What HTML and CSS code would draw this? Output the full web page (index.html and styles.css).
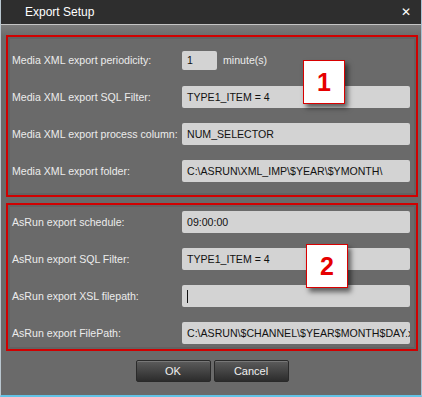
FILE: index.html
```html
<!DOCTYPE html>
<html lang="en">
  <head>
    <meta charset="UTF-8" />
    <meta name="viewport" content="width=device-width, initial-scale=1.0" />
    <title>Export Setup</title>
    <link rel="stylesheet" href="styles.css">
  </head>
  <body>
    <div class="dialog">
      <div class="titlebar">
        <span class="title">Export Setup</span>
        <span class="close">&#x2715;</span>
      </div>
      <div class="content">
        <section class="group group-media">
          <div class="row">
            <span class="label">Media XML export periodicity:</span>
            <div class="inline">
              <div class="field field-short">1</div>
              <span class="unit">minute(s)</span>
            </div>
          </div>
          <div class="row">
            <span class="label">Media XML export SQL Filter:</span>
            <div class="field">TYPE1_ITEM = 4</div>
          </div>
          <div class="row">
            <span class="label">Media XML export process column:</span>
            <div class="field">NUM_SELECTOR</div>
          </div>
          <div class="row">
            <span class="label">Media XML export folder:</span>
            <div class="field">C:\ASRUN\XML_IMP\$YEAR\$YMONTH\</div>
          </div>
          <div class="callout callout-1">1</div>
        </section>

        <section class="group group-asrun">
          <div class="row">
            <span class="label">AsRun export schedule:</span>
            <div class="field">09:00:00</div>
          </div>
          <div class="row">
            <span class="label">AsRun export SQL Filter:</span>
            <div class="field">TYPE1_ITEM = 4</div>
          </div>
          <div class="row">
            <span class="label">AsRun export XSL filepath:</span>
            <div class="field"><span class="caret"></span></div>
          </div>
          <div class="row">
            <span class="label">AsRun export FilePath:</span>
            <div class="field">C:\ASRUN\$CHANNEL\$YEAR$MONTH$DAY.xml</div>
          </div>
          <div class="callout callout-2">2</div>
        </section>

        <div class="buttons">
          <button type="button" class="btn">OK</button>
          <button type="button" class="btn">Cancel</button>
        </div>
      </div>
    </div>
  </body>
</html>
```

FILE: styles.css
```css
* {
  box-sizing: border-box;
}
body {
  margin: 0;
  font-family: "Liberation Sans", Arial, sans-serif;
  font-size: 10.6px;
}
.dialog {
  width: 422px;
  height: 397px;
  display: flex;
  flex-direction: column;
  background: #6a6a6a;
  border-left: 1px solid #b9c6cf;
  border-right: 1px solid #a9c3d3;
  border-bottom: 2px solid #62c3e6;
}
.titlebar {
  height: 25px;
  display: flex;
  align-items: center;
  justify-content: space-between;
  padding: 0 10px 0 24px;
  background: #2e2e2e;
  border-bottom: 1px solid #c4c4c4;
  color: #fff;
  font-size: 12px;
}
.close {
  font-family: "DejaVu Sans", sans-serif;
  font-size: 12px;
  font-weight: bold;
}
.content {
  flex: 1;
  display: flex;
  flex-direction: column;
  padding: 10px 3px 0 5px;
  background: linear-gradient(#7c7c7c, #6a6a6a 12px);
}
.group {
  position: relative;
  display: flex;
  flex-direction: column;
  gap: 15px;
  border: 2px solid #d00000;
  box-shadow: inset 0 0 0 2px #626262;
  padding: 12px 6px 13px 4px;
}
.group-asrun {
  margin-top: 6px;
  padding-top: 6px;
  padding-bottom: 5px;
}
.row {
  height: 22px;
  display: grid;
  grid-template-columns: 170px 1fr;
  align-items: center;
  color: #ececec;
}
.label {
  white-space: nowrap;
}
.inline {
  display: flex;
  align-items: center;
  gap: 6px;
}
.field {
  height: 22px;
  display: flex;
  align-items: center;
  padding-left: 5px;
  background: #d3d3d3;
  border-radius: 2px;
  color: #111;
  white-space: nowrap;
  overflow: hidden;
}
.field-short {
  width: 35px;
  height: 19px;
}
.unit {
  color: #ececec;
}
.caret {
  width: 1px;
  height: 13px;
  background: #111;
}
.callout {
  position: absolute;
  width: 42px;
  height: 44px;
  display: flex;
  align-items: center;
  justify-content: center;
  background: #fff;
  border: 1px solid #d80000;
  box-shadow: 3px 4px 5px rgba(0, 0, 0, 0.55);
  color: #e60000;
  font-weight: bold;
  font-size: 25px;
}
.callout-1 {
  left: 295px;
  top: 23px;
}
.callout-2 {
  left: 298px;
  top: 39px;
}
.buttons {
  display: flex;
  justify-content: center;
  gap: 3px;
  margin-top: 9px;
}
.btn {
  width: 75px;
  height: 22px;
  border: 1px solid #2a2a2a;
  border-radius: 2px;
  background: linear-gradient(#5c5c5c, #2c2c2c);
  box-shadow: inset 0 1px 0 #777;
  color: #f0f0f0;
  font-family: "Liberation Sans", Arial, sans-serif;
  font-size: 11px;
}
```
